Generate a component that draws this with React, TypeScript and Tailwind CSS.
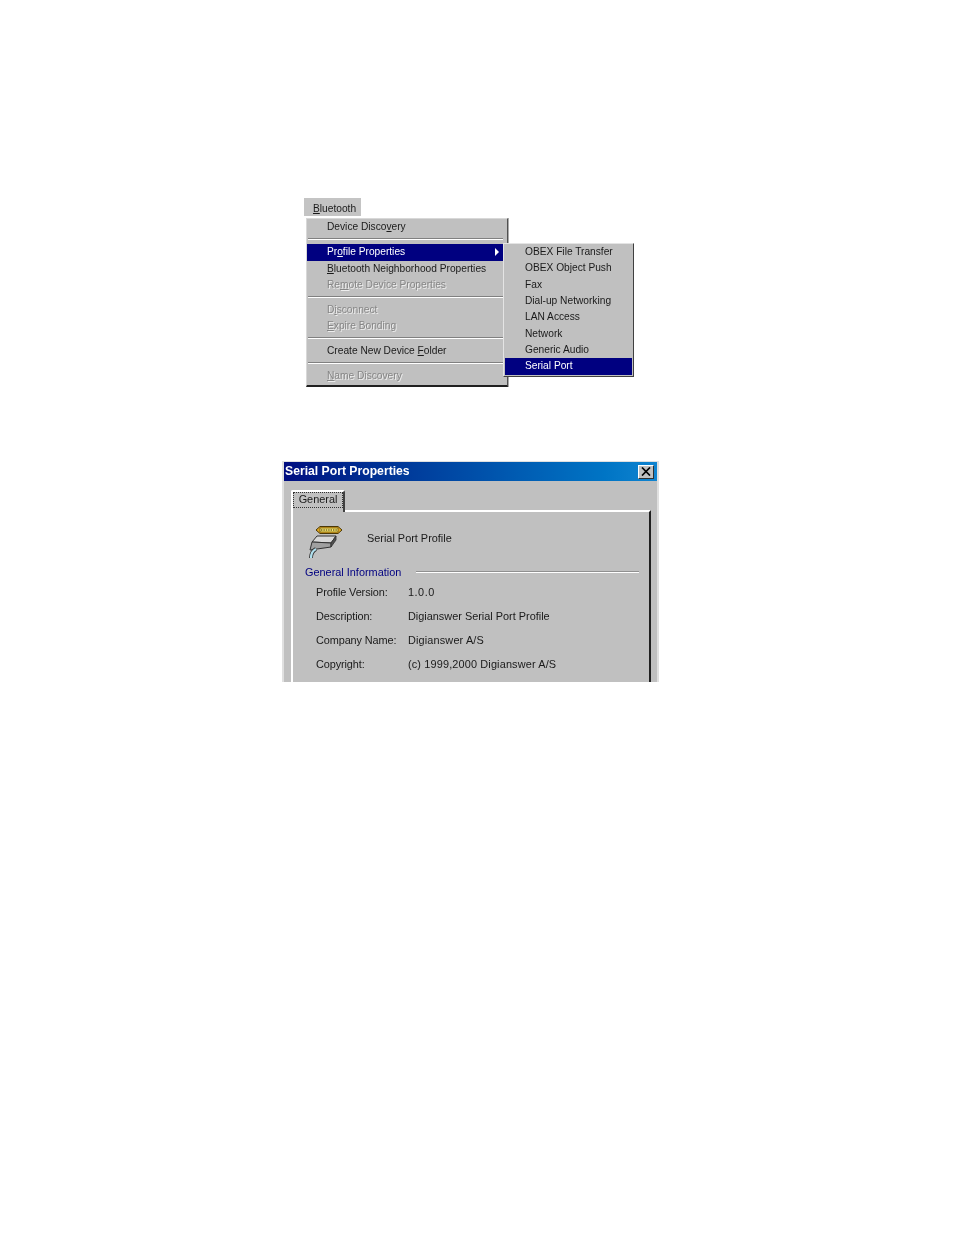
import { type ReactNode } from 'react';

type Item = { label: ReactNode; disabled?: boolean; active?: boolean; arrow?: boolean } | 'sep';

const menu: Item[] = [
  { label: <>Device Disco<u>v</u>ery</> },
  'sep',
  { label: <>Pr<u>o</u>file Properties</>, active: true, arrow: true },
  { label: <><u>B</u>luetooth Neighborhood Properties</> },
  { label: <>Re<u>m</u>ote Device Properties</>, disabled: true },
  'sep',
  { label: <>D<u>i</u>sconnect</>, disabled: true },
  { label: <><u>E</u>xpire Bonding</>, disabled: true },
  'sep',
  { label: <>Create New Device <u>F</u>older</> },
  'sep',
  { label: <><u>N</u>ame Discovery</>, disabled: true },
];

const profiles = ['OBEX File Transfer', 'OBEX Object Push', 'Fax', 'Dial-up Networking', 'LAN Access', 'Network', 'Generic Audio', 'Serial Port'];

const info = [
  ['Profile Version:', '1.0.0', 'tracking-[0.5px]'],
  ['Description:', 'Digianswer Serial Port Profile', ''],
  ['Company Name:', 'Digianswer A/S', 'tracking-[0.15px]'],
  ['Copyright:', '(c) 1999,2000 Digianswer A/S', 'tracking-[0.15px]'],
];

function Separator() {
  return <div className="mb-[3.9px] ml-[1px] mt-[2.7px] h-[2px] shrink-0 border-t border-b border-t-[#808080] border-b-white" />;
}

function BluetoothMenu() {
  return (
    <div className="relative ml-[304px] w-[330px] whitespace-nowrap text-[10.2px]">
      <div className="flex h-[18px] w-[57px] items-center bg-[#c4c4c4] pl-[9px] pt-[5px]">
        <span><u>B</u>luetooth</span>
      </div>
      <div className="ml-[2px] mt-[2px] flex h-[169px] w-[202px] flex-col border border-b-2 border-[#d8d8d8] border-r-[#505050] border-b-[#202020] bg-[#c0c0c0] pr-[4px] pt-[0.3px] shadow-[1px_0_0_#aaa]">
        {menu.map((m, i) =>
          m === 'sep' ? (
            <Separator key={i} />
          ) : (
            <div
              key={i}
              className={`flex h-[16.35px] shrink-0 items-center justify-between pl-[20px] pr-[3px] ${
                m.active ? 'bg-[#000080] text-white' : m.disabled ? 'text-[#868686] [text-shadow:1px_1px_0_#eee]' : ''
              }`}
            >
              <span>{m.label}</span>
              {m.arrow && <span className="-mt-[1px] mr-[1px] h-0 w-0 border-y-[4px] border-l-[4px] border-y-transparent border-l-white" />}
            </div>
          )
        )}
      </div>
      <div className="absolute left-[199px] top-[45px] flex h-[134px] w-[131px] flex-col border border-[#e4e4e4] border-b-[#404040] border-r-[#404040] bg-[#c0c0c0] px-[1px]">
        {profiles.map((p, i) => (
          <div
            key={p}
            className={`flex h-[16.35px] shrink-0 items-center pl-[20px] ${i === 7 ? 'bg-[#000080] text-white' : ''}`}
          >
            {p}
          </div>
        ))}
      </div>
    </div>
  );
}

function PortIcon() {
  return (
    <svg width="36" height="34" viewBox="0 0 36 34" className="shrink-0">
      <path d="M9 4 L13 0.5 H31 L35 4 L31 7.5 H13 Z" fill="#e0a820" stroke="#4a3808" strokeWidth="1" />
      <rect x="13" y="2" width="18" height="4" fill="#ffe860" stroke="#3a2c08" strokeWidth="0.6" />
      <path d="M14 4 H30" stroke="#222" strokeWidth="1.2" strokeDasharray="1.4 1" />
      <path d="M5 16 L10 10 H29 L24 17 Z" fill="#d8d8d8" stroke="#333" strokeWidth="1" />
      <path d="M5 16 L24 17 V21 L3 24 Z" fill="#a0a0a0" stroke="#333" strokeWidth="1" />
      <path d="M24 17 L29 10 V14 L24 21 Z" fill="#505050" stroke="#333" strokeWidth="0.8" />
      <path d="M9 23 C5 25 4 28 4 32" fill="none" stroke="#333" strokeWidth="4" />
      <path d="M9 23 C5 25 4 28 4 32" fill="none" stroke="#b0e0ee" strokeWidth="2.2" />
    </svg>
  );
}

function CloseButton() {
  return (
    <div className="flex h-[14px] w-[16px] items-center justify-center border border-t-white border-l-white border-r-[#303030] border-b-[#303030] bg-[#c0c0c0]">
      <svg width="10" height="9" viewBox="0 0 10 9">
        <path d="M1 0.5 L9 8.5 M9 0.5 L1 8.5" stroke="#000" strokeWidth="1.7" />
      </svg>
    </div>
  );
}

function PropertiesDialog() {
  return (
    <div className="ml-[282px] mt-[74px] h-[221px] w-[377px] overflow-hidden whitespace-nowrap border-l-2 border-r-2 border-t border-[#e0e0e0] bg-[#c0c0c0] text-[10.9px]">
      <div className="flex h-[19px] items-center justify-between bg-gradient-to-r from-[#000c80] to-[#1084d0] pl-[1px] pr-[3px]">
        <span className="text-[12.2px] font-bold text-white">Serial Port Properties</span>
        <CloseButton />
      </div>
      <div className="pl-[7px] pt-[9px]">
        <div className="relative z-10 -mb-[2px] flex h-[22px] w-[54px] items-start justify-center rounded-t-[2px] border-l-2 border-t-2 border-r-2 border-l-white border-t-white border-r-[#404040] bg-[#c0c0c0]">
          <span className="border border-dotted border-[#333] px-[5px] pb-[1px] leading-[13px]">General</span>
        </div>
        <div className="h-[180px] w-[360px] border-l-2 border-t-2 border-r-2 border-l-white border-t-white border-r-[#202020] pl-[12px] pr-[10px] pt-[14px]">
          <div className="flex h-[35px] items-start pl-[2px]">
            <PortIcon />
            <span className="ml-[24px] mt-[7px]">Serial Port Profile</span>
          </div>
          <div className="mt-[6px] flex items-center text-[#000080]">
            <span>General Information</span>
            <div className="ml-[15px] h-[2px] flex-1 border-t border-b border-t-[#909090] border-b-white" />
          </div>
          <div className="mt-[3px] flex flex-col pl-[11px]">
            {info.map(([k, v, t]) => (
              <div key={k} className="flex h-[24px] items-center">
                <span className="w-[92px] tracking-[-0.1px]">{k}</span>
                <span className={t}>{v}</span>
              </div>
            ))}
          </div>
        </div>
      </div>
    </div>
  );
}

export default function App() {
  return (
    <div className="h-[1235px] w-[954px] overflow-hidden bg-white pt-[198px] font-['Liberation_Sans',Arial,sans-serif] leading-none text-[#1a1a1a] blur-[0.35px]">
      <BluetoothMenu />
      <PropertiesDialog />
    </div>
  );
}
